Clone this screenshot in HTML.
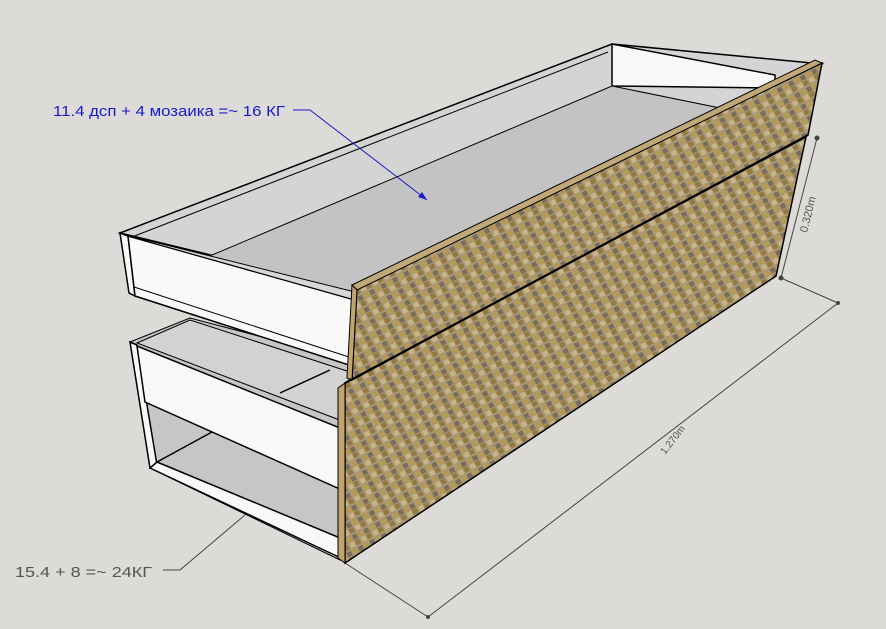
<!DOCTYPE html>
<html><head><meta charset="utf-8"><style>
html,body{margin:0;padding:0;background:#dcdbd7;}
svg{display:block}
</style></head><body>
<svg width="886" height="629" viewBox="0 0 886 629" xmlns="http://www.w3.org/2000/svg">
<defs>
<pattern id="m" width="13" height="13" patternUnits="userSpaceOnUse" patternTransform="rotate(-28)">
<rect width="13" height="13" fill="#a89878"/>
<rect x="1" y="1" width="5" height="5" fill="#b8994f"/>
<rect x="7" y="1" width="5" height="5" fill="#7a6e5a"/>
<rect x="1" y="7" width="5" height="5" fill="#c9b488"/>
<rect x="7" y="7" width="5" height="5" fill="#94793f"/>
</pattern>
</defs>
<rect width="886" height="629" fill="#dcdbd7"/>

<!-- dimension lines -->
<g stroke="#444" stroke-width="1" fill="none">
<line x1="345" y1="563" x2="428" y2="617"/>
<line x1="428" y1="617" x2="838" y2="303"/>
<line x1="781" y1="278" x2="838" y2="303"/>
<line x1="817" y1="138" x2="781" y2="278"/>
<polyline points="163,570 180,570 245,515"/>
</g>
<g fill="#444"><circle cx="428" cy="617" r="2"/><circle cx="838" cy="303" r="2"/><circle cx="817" cy="138" r="2.5"/><circle cx="781" cy="278" r="2.5"/></g>
<text x="0" y="0" font-family="Liberation Sans, sans-serif" font-size="10" fill="#555" transform="translate(665,455) rotate(-52)">1.270m</text>
<text x="0" y="0" font-family="Liberation Sans, sans-serif" font-size="11" fill="#555" transform="translate(807,233) rotate(-76)">0.320m</text>
<text x="15" y="577" font-family="Liberation Sans, sans-serif" font-size="15" fill="#555" textLength="137" lengthAdjust="spacingAndGlyphs">15.4 + 8 =~ 24КГ</text>

<!-- lower drawer -->
<polygon points="130,342 190,318 350,360 350,560 340,560 150,468" fill="#c6c6c6" stroke="#000" stroke-width="1"/>
<polygon points="137,343 190,320 350,372 345,422" fill="#d2d2d2" stroke="#000" stroke-width="1"/>
<polygon points="130,342 137,345 157,465 150,468" fill="#f8f8f8" stroke="#000" stroke-width="1.5"/>
<polygon points="137,346 345,430 342,490 145,402" fill="#f8f8f8" stroke="#000" stroke-width="1.5"/>
<line x1="280" y1="393" x2="330" y2="370" stroke="#000" stroke-width="1.5"/>
<line x1="157" y1="462" x2="212" y2="432" stroke="#000" stroke-width="1.5"/>
<polygon points="157,462 345,540 345,560 150,468" fill="#f8f8f8" stroke="#000" stroke-width="1.5"/>

<!-- upper drawer -->
<polygon points="120,233 612,44 822,64 355,290" fill="#d4d4d4" stroke="#000" stroke-width="1.5"/>
<polygon points="612,44 775,75 775,88 612,86" fill="#f8f8f8" stroke="#000" stroke-width="1.5"/>
<polygon points="205,258 612,86 720,108 355,302" fill="#c3c3c3" stroke="#000" stroke-width="1"/>
<line x1="132" y1="237" x2="608" y2="52" stroke="#000" stroke-width="1"/>
<polygon points="120,233 128,236 135,296 129,293" fill="#f8f8f8" stroke="#000" stroke-width="1.5"/>
<polygon points="128,236 355,300 352,366 135,296" fill="#f9f9f9" stroke="#000" stroke-width="1.5"/>
<line x1="134" y1="287" x2="352" y2="358" stroke="#000" stroke-width="1"/>
<polygon points="138,238 355,292 355,300 128,236" fill="#d8d8d8" stroke="#000" stroke-width="1"/>

<!-- mosaic panels -->
<polygon points="345,383 806,137 776,276 345,563" fill="url(#m)" stroke="#000" stroke-width="1.5"/>
<polygon points="338,388 345,383 345,563 338,558" fill="#c0a470" stroke="#000" stroke-width="1"/>
<polygon points="357,287 822,63 808,135 352,380" fill="url(#m)" stroke="#000" stroke-width="1.5"/>
<polygon points="352,285 815,60 822,63 357,290" fill="#c0a878" stroke="#000" stroke-width="1"/>
<polygon points="352,285 357,290 352,380 347,378" fill="#c0a470" stroke="#000" stroke-width="1"/>
<line x1="345" y1="383" x2="808" y2="135" stroke="#000" stroke-width="2"/>

<!-- annotation -->
<text x="53" y="116" font-family="Liberation Sans, sans-serif" font-size="15" fill="#1a1acc" textLength="232" lengthAdjust="spacingAndGlyphs">11.4 дсп + 4 мозаика =~ 16 КГ</text>
<polyline points="293,110 310,110 427,200" stroke="#1a1acc" stroke-width="1" fill="none"/>
<polygon points="427,200 418,197 422,192" fill="#1a1acc"/>
</svg>
</body></html>
